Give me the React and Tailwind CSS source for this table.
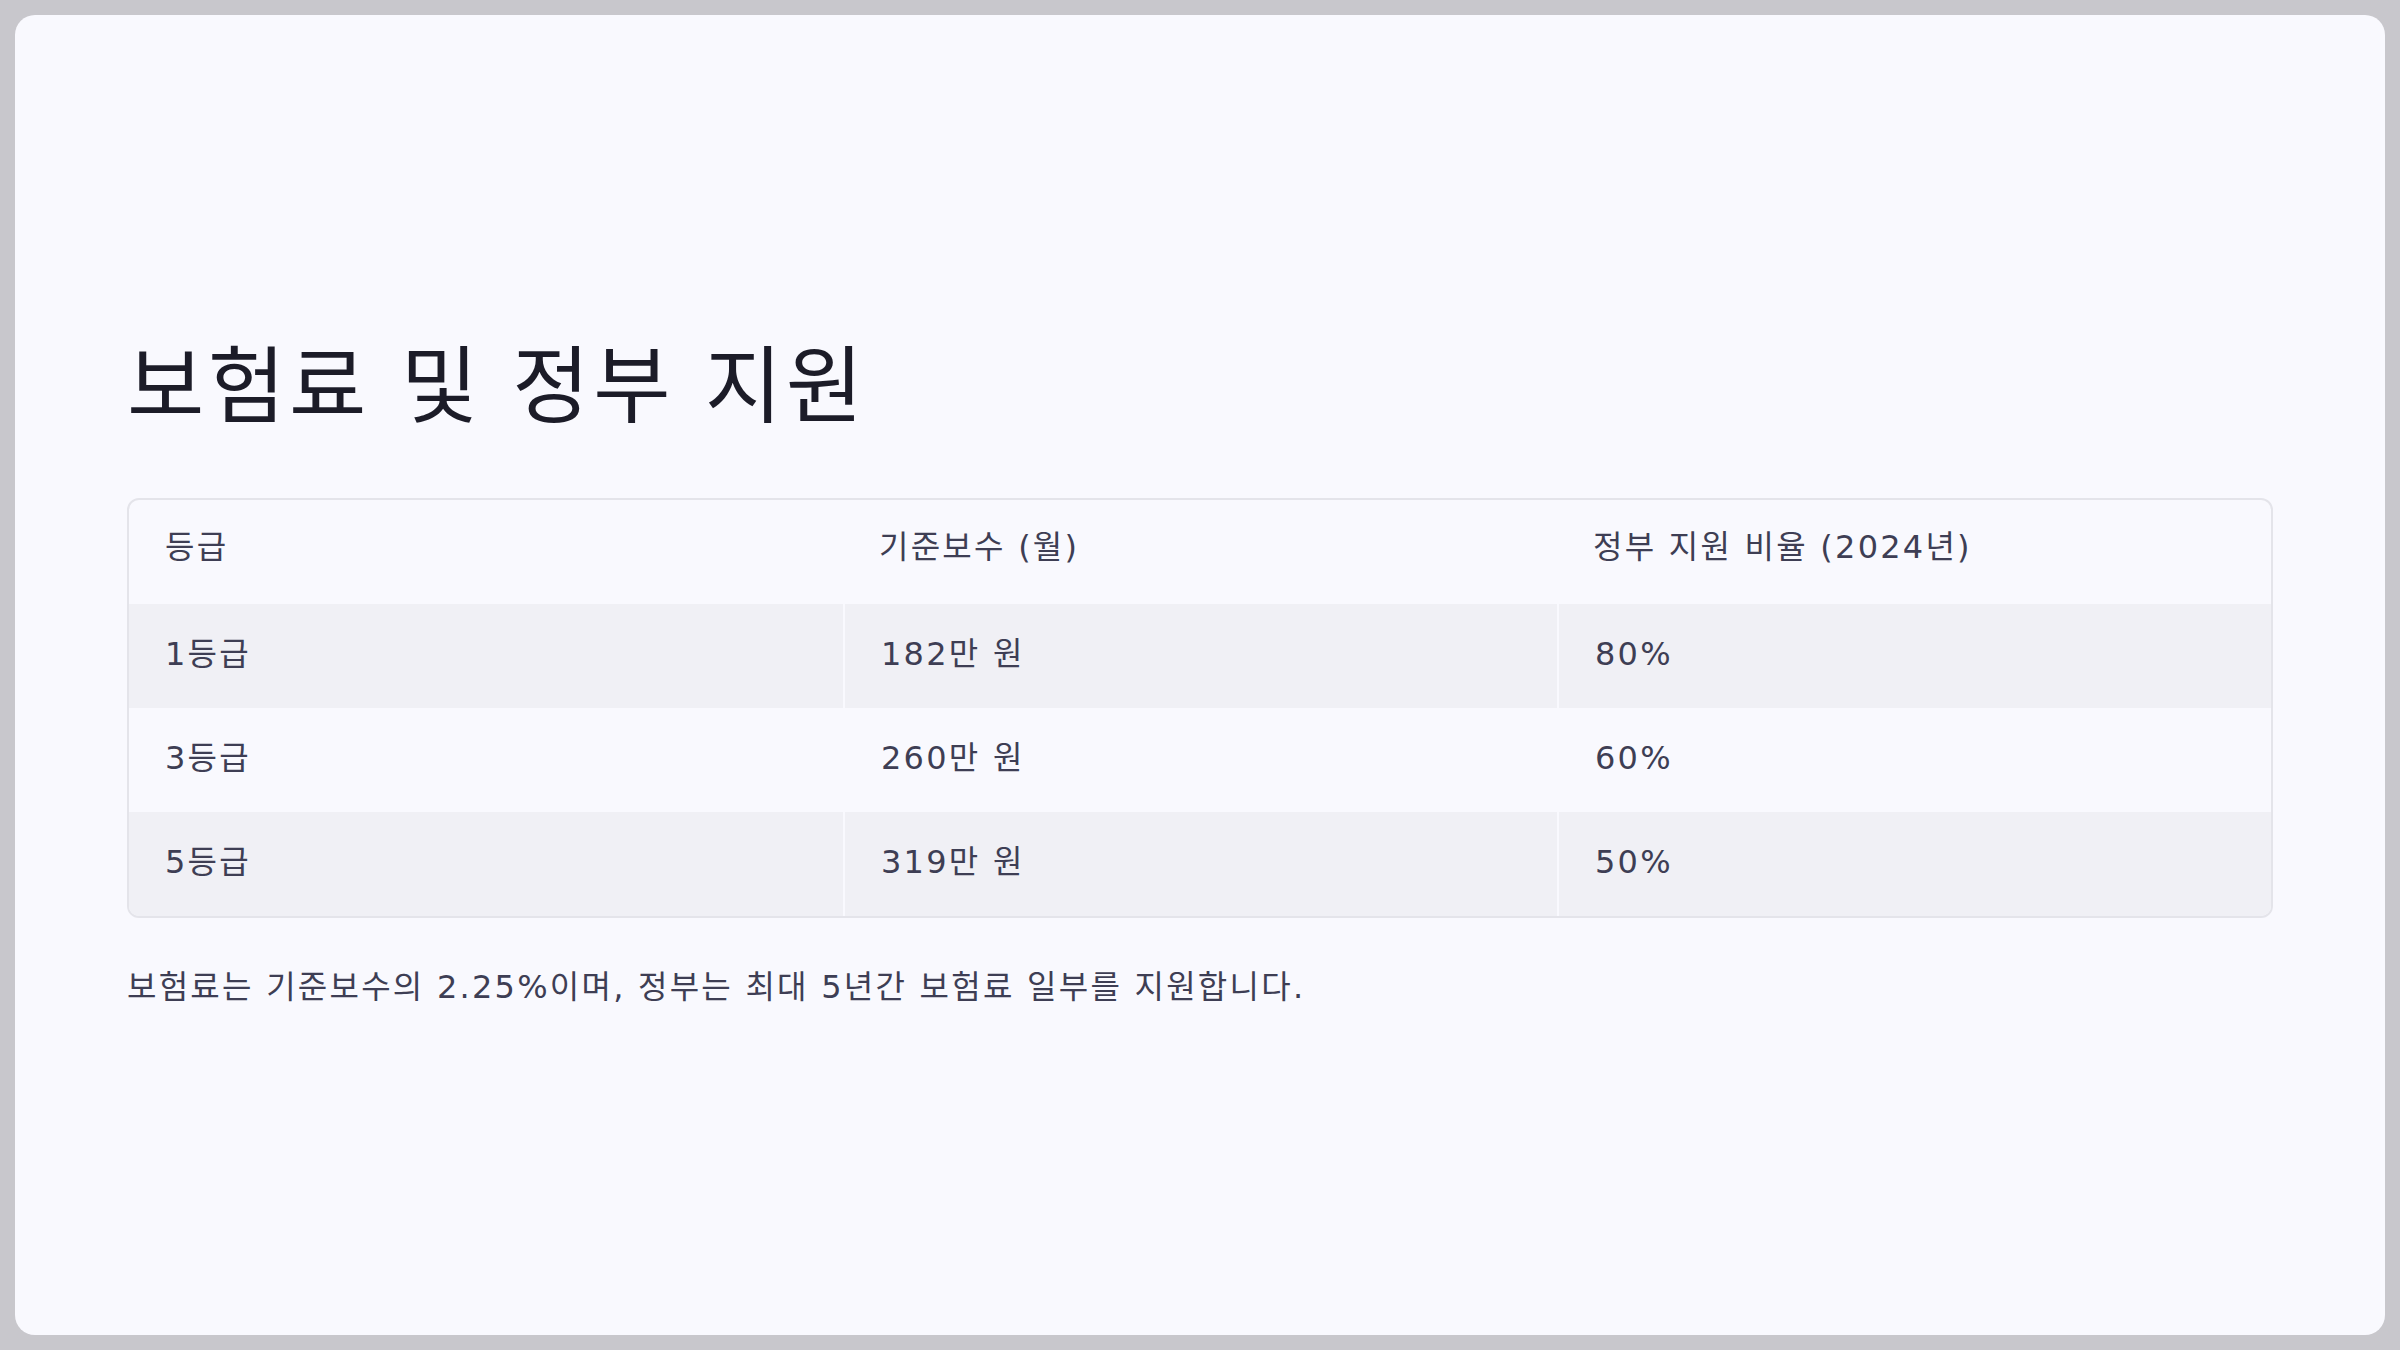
export default function App() {
  const rows = [
    ["1등급", "182만 원", "80%"],
    ["3등급", "260만 원", "60%"],
    ["5등급", "319만 원", "50%"],
  ];
  return (
    <div className="w-[2400px] h-[1350px] bg-[#c8c7cc] p-[15px] font-['DejaVu_Sans','Noto_Sans_CJK_KR',sans-serif]">
      <div className="w-full h-full rounded-[20px] bg-[#f9f9fe] flex flex-col justify-center px-[112px] pb-[2px]">
        <h1 className="text-[84px] leading-[1.2] tracking-[0.045em] text-[#1c1c28] font-normal mb-[61px]">
          보험료 및 정부 지원
        </h1>
        <div className="border-2 border-[#e4e4ea] rounded-[12px] overflow-hidden text-[32px] tracking-[0.07em] text-[#3e3e54]">
          <div className="grid grid-cols-3 h-[104px] items-center pb-[10px]">
            <div className="px-9">등급</div>
            <div className="px-9">기준보수 (월)</div>
            <div className="px-9">정부 지원 비율 (2024년)</div>
          </div>
          {rows.map((r, i) => (
            <div
              key={i}
              className={
                "grid grid-cols-3 h-[104px] " +
                (i % 2 === 0 ? "bg-[#f0f0f5]" : "bg-[#f9f9fe]")
              }
            >
              <div className="px-9 pb-[5px] flex items-center">{r[0]}</div>
              <div className="px-9 pb-[5px] flex items-center border-l-2 border-[#f9f9fe]">{r[1]}</div>
              <div className="px-9 pb-[5px] flex items-center border-l-2 border-[#f9f9fe]">{r[2]}</div>
            </div>
          ))}
        </div>
        <p className="mt-[45px] text-[32px] leading-[1.5] tracking-[0.07em] text-[#3e3e54]">
          보험료는 기준보수의 2.25%이며, 정부는 최대 5년간 보험료 일부를 지원합니다.
        </p>
      </div>
    </div>
  );
}
